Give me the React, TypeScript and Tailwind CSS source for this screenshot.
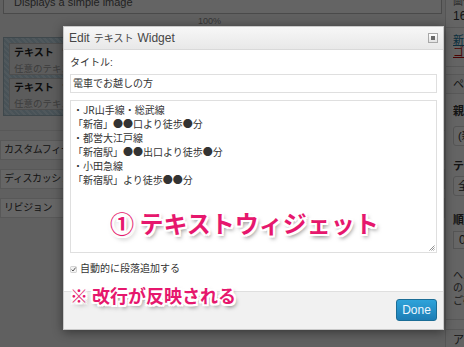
export default function App() {
  const font = "font-['Liberation_Sans','Noto_Sans_CJK_JP',sans-serif]";
  const cjk = "font-['Noto_Sans_CJK_JP','Liberation_Sans',sans-serif]";
  const lines = [
    "・JR山手線・総武線",
    "「新宿」●●口より徒歩●分",
    "・都営大江戸線",
    "「新宿駅」●●出口より徒歩●分",
    "・小田急線",
    "「新宿駅」より徒歩●●分",
  ];
  const shadow =
    "[text-shadow:-2px_-2px_0_#fff,2px_-2px_0_#fff,-2px_2px_0_#fff,2px_2px_0_#fff,0_-2px_0_#fff,0_2px_0_#fff,-2px_0_0_#fff,2px_0_0_#fff,2px_3px_4px_rgba(0,0,0,0.55)]";
  return (
    <div className={`relative w-[464px] h-[347px] overflow-hidden bg-[#f1f1f1] ${font}`}>
      {/* underlying page */}
      <div className="flex h-full">
        {/* main column */}
        <div className="w-[445px] shrink-0 flex flex-col">
          <div className="mx-[3px] h-[14px] border-x border-b border-[#b8b8b8] bg-[#fafafa] pl-[10px] overflow-hidden">
            <div className="-mt-[3px] text-[11px] leading-[11px] text-[#555]">Displays a simple image</div>
          </div>
          <div className="h-[23px] pl-[198px] pt-[3px] text-[9px] leading-[9px] text-[#888]">100%</div>
          <div className="mx-[3px] h-[79px] border border-[#9db3bf] bg-[repeating-linear-gradient(45deg,#b3ccd9_0,#b3ccd9_2px,#c7dbe6_2px,#c7dbe6_4px)] p-[5px] flex flex-col gap-[3px]">
            {["任意のテキストです。", "任意のテキストまたは HTML"].map((d, i) => (
              <div key={i} className="h-[32px] border border-[#c4c4c4] bg-[#e6e6e6] px-[4px] pt-[3px]">
                <div className="text-[10px] leading-[12px] font-bold text-[#222]">
                  テキスト<span className="ml-[8px] font-normal text-[#999]">{i === 0 ? "電車でお越しの方" : "営業時間"}</span>
                </div>
                <div className="mt-[4px] text-[9.5px] leading-[12px] text-[#999]">{d}</div>
              </div>
            ))}
          </div>
          <div className="mt-[14px] h-[10px] border-t border-[#dcdcdc]" />
          {["カスタムフィールド", "ディスカッション", "リビジョン"].map((t) => (
            <div key={t} className="h-[20px] mb-[9px] border border-[#dcdcdc] bg-white pl-[3px] text-[10px] leading-[18px] tracking-[-0.4px] text-[#333]">
              {t}
            </div>
          ))}
        </div>
        {/* sidebar */}
        <div className="w-[200px] shrink-0 border-l border-[#d4d4d4] bg-[#fbfbfb] flex flex-col text-[#333]">
          <div className="h-[9px] overflow-hidden pl-[7px]">
            <div className="-mt-[3px] text-[10px] leading-[10px] text-[#777]">画像サイズ</div>
          </div>
          <div className="mt-[2px] pl-[7px] text-[12px] leading-[12px]">16件</div>
          <div className="h-[6px] border-b border-[#dcdcdc]" />
          <div className="pt-[6px] pl-[7px] text-[11px] leading-[12px]">
            <div className="text-[#21759b] underline">新規追加</div>
            <div className="text-[#bc0b0b] underline">ゴミ箱へ移動</div>
          </div>
          <div className="h-[10px] border-b border-[#dcdcdc]" />
          <div className="h-[8px]" />
          <div className="h-[20px] border-y border-[#dcdcdc] bg-[#f4f4f4] pl-[7px] text-[11px] leading-[18px]">ページ属性</div>
          <div className="pt-[11px] pl-[7px] text-[11px] leading-[12px] font-bold">親</div>
          <div className="mt-[9px] ml-[7px] h-[20px] w-[150px] rounded-[3px] border border-[#d4d4d4] bg-white px-[4px] text-[11px] leading-[18px]">(親なし)</div>
          <div className="mt-[14px] pl-[7px] text-[11px] leading-[12px] font-bold">テンプレート</div>
          <div className="mt-[4px] ml-[7px] h-[20px] w-[150px] rounded-[3px] border border-[#d4d4d4] bg-white px-[4px] text-[11px] leading-[18px]">全幅</div>
          <div className="mt-[18px] pl-[7px] text-[11px] leading-[12px] font-bold">順序</div>
          <div className="mt-[5px] ml-[7px] h-[18px] w-[40px] border border-[#d4d4d4] bg-white px-[5px] text-[12px] leading-[16px]">0</div>
          <div className="mt-[21px] pl-[7px] text-[10px] leading-[12.5px] text-[#444]">
            <div>ヘルプが必要ですか？</div>
            <div>のオプションについて</div>
            <div>ご確認ください。</div>
          </div>
          <div className="h-[14px] border-b border-[#dcdcdc]" />
          <div className="mt-[9px] border-t border-[#dcdcdc] bg-[#f4f4f4] pl-[7px] pt-[3px] text-[11px] leading-[14px]">アイキャッチ画像</div>
        </div>
      </div>

      {/* dark overlay */}
      <div className="absolute inset-0 bg-black/60" />

      {/* modal */}
      <div className="absolute left-[63px] top-[26px] w-[381px] h-[304px] flex flex-col border border-[#c9c9c9] bg-white shadow-[0_2px_10px_rgba(0,0,0,0.45)]">
        <div className="h-[23px] shrink-0 flex items-center justify-between border-b border-[#d9d9d9] bg-gradient-to-b from-[#f7f7f7] to-[#e8e8e8] px-[5px]">
          <div className="flex items-center text-[12px] text-[#464646]">
            <span>Edit</span>
            <span className="mx-[4px] text-[10px]">テキスト</span>
            <span>Widget</span>
          </div>
          <div className="w-[10px] h-[10px] border border-[#a8a8a8] bg-gradient-to-b from-white to-[#e2e2e2] flex items-center justify-center">
            <div className="w-[4px] h-[4px] bg-[#6a6a6a]" />
          </div>
        </div>
        <div className="flex-1 px-[6px] pt-[6px] text-[#333]">
          <div className="text-[10px] leading-[14px]">タイトル:</div>
          <div className="mt-[4px] h-[19px] border border-[#dfdfdf] pl-[2px] text-[10px] leading-[17px]">電車でお越しの方</div>
          <div className={`relative mt-[7px] h-[153px] border border-[#dfdfdf] pl-[2px] pt-[2px] text-[10px] leading-[14px] ${cjk}`}>
            {lines.map((l) => (
              <div key={l}>{l}</div>
            ))}
            <svg className="absolute right-[1px] bottom-[1px]" width="6" height="6" viewBox="0 0 6 6">
              <path d="M0.5 5.5 L5.5 0.5 M2.5 5.5 L5.5 2.5 M4.5 5.5 L5.5 4.5" stroke="#777" strokeWidth="0.8" />
            </svg>
          </div>
          <div className="mt-[9px] h-[14px] flex items-center">
            <svg width="7" height="7" viewBox="0 0 7 7">
              <rect x="0.5" y="0.5" width="6" height="6" rx="1" fill="#f2f2f2" stroke="#bbb" strokeWidth="0.6" />
              <path d="M1.6 3.6 L3 5 L5.6 1.6" stroke="#444" strokeWidth="0.9" fill="none" />
            </svg>
            <span className="ml-[3px] text-[10px] leading-[14px]">自動的に段落追加する</span>
          </div>
        </div>
        <div className="h-[38px] shrink-0 flex justify-end border-t border-[#dfdfdf] bg-[#f1f1f1] pt-[7px] pr-[6px]">
          <div className="w-[41px] h-[22px] rounded-[3px] border border-[#1b6d96] bg-gradient-to-b from-[#2ea3da] to-[#1d7db5] text-center text-[12px] leading-[20px] text-[#eef7ff]">
            Done
          </div>
        </div>
      </div>

      {/* annotations */}
      <div className={`absolute left-[110px] top-[211px] text-[24px] leading-[24px] font-bold text-[#e6176d] ${cjk} ${shadow}`}>
        ① テキストウィジェット
      </div>
      <div className={`absolute left-[70px] top-[286px] text-[18px] leading-[18px] font-bold text-[#e6176d] ${cjk} ${shadow}`}>
        ※ 改行が反映される
      </div>
    </div>
  );
}
